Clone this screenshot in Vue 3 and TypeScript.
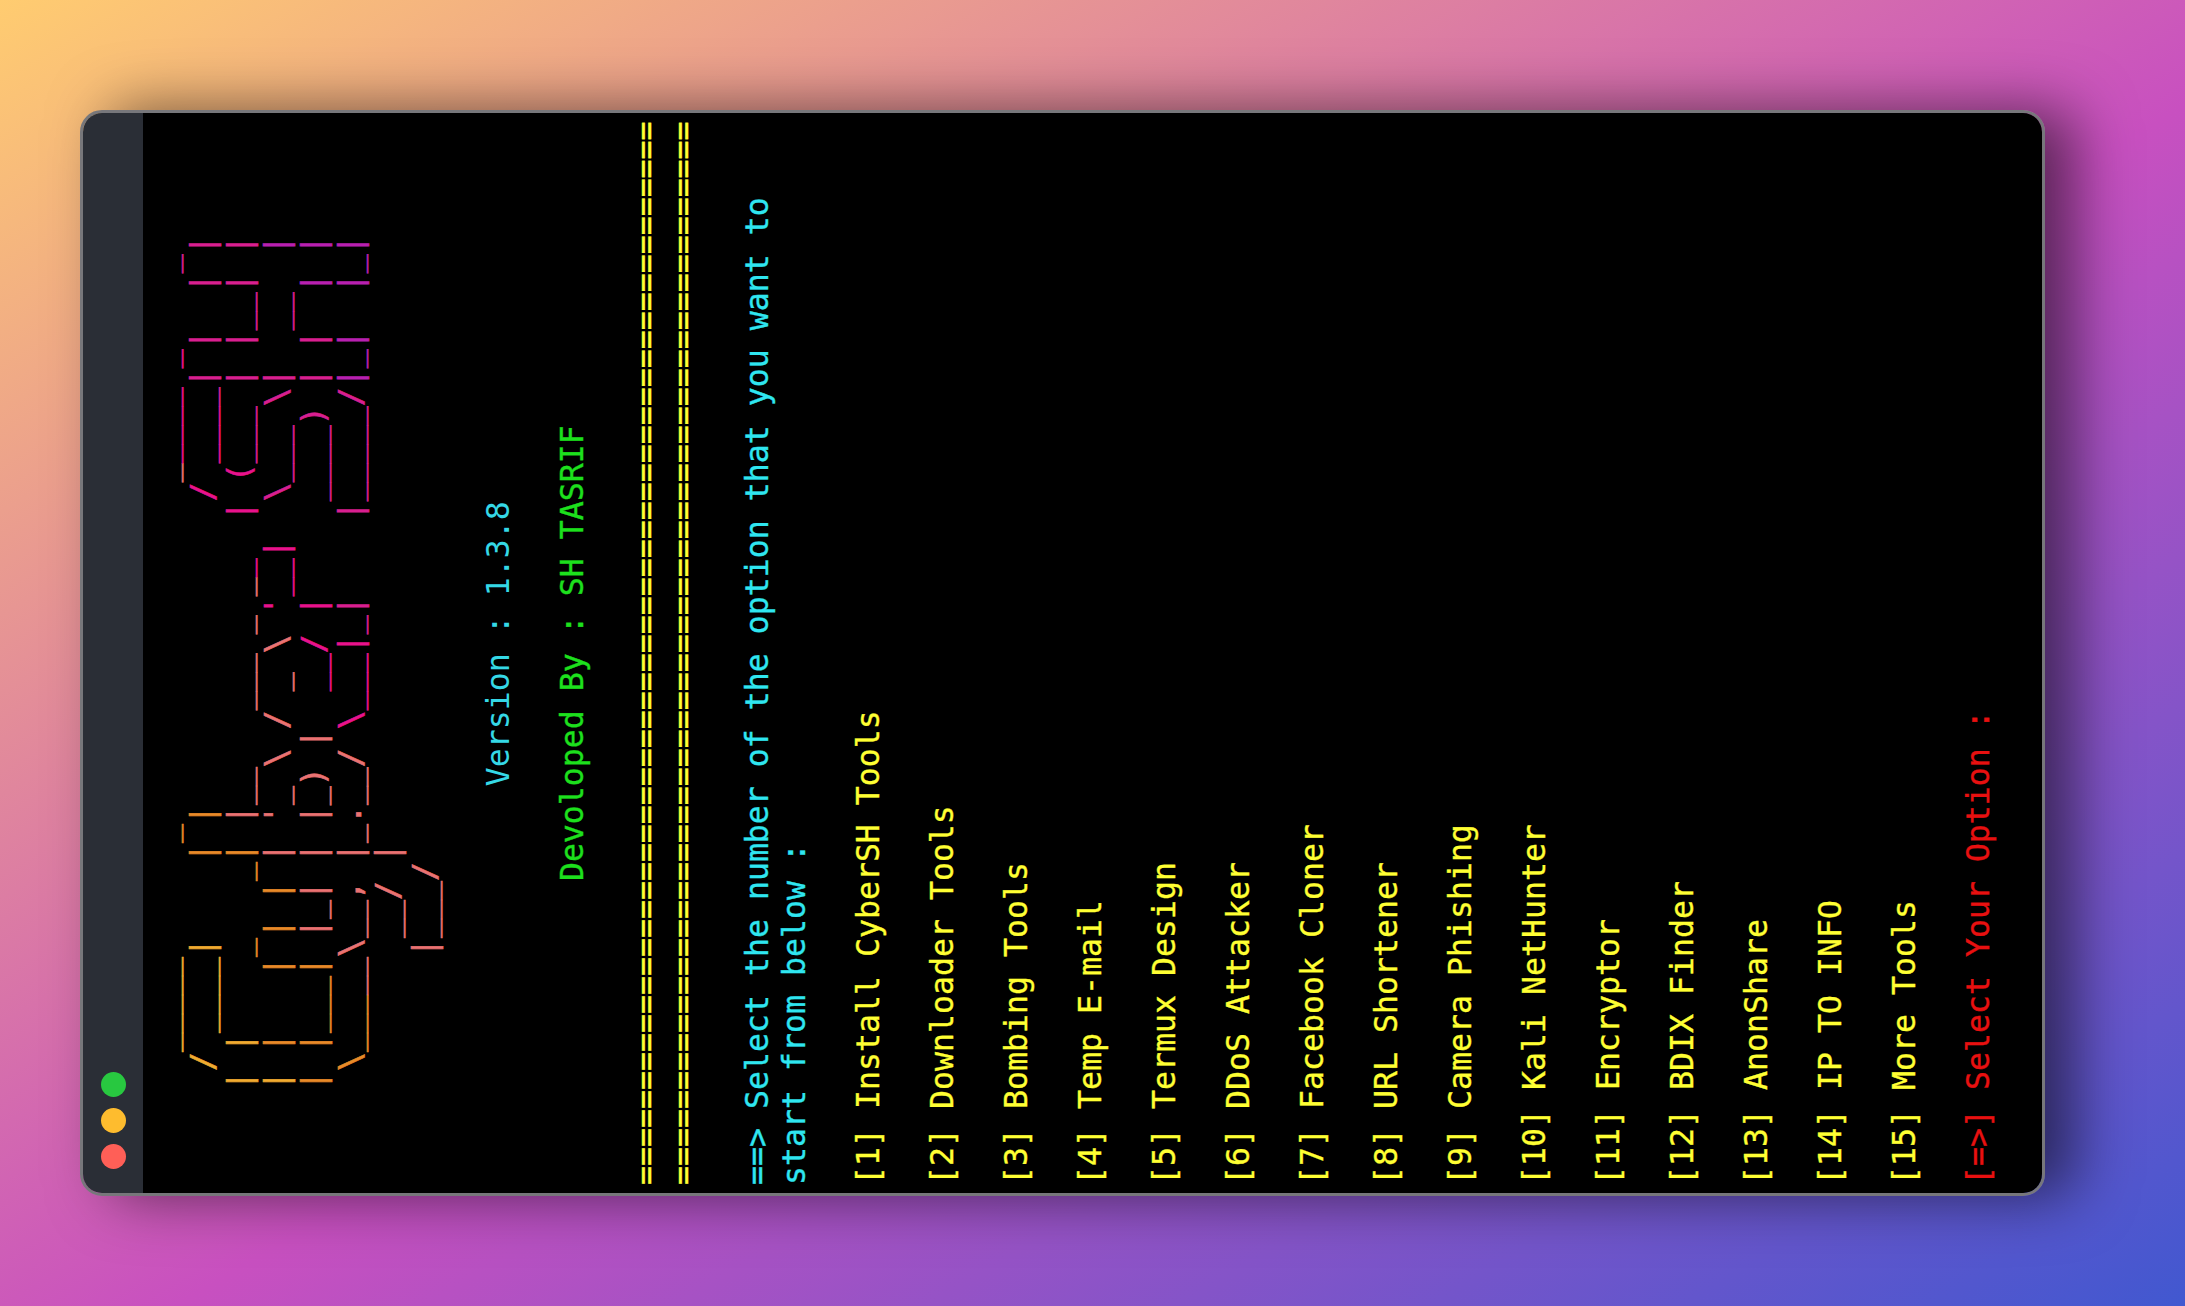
<script setup lang="ts">
interface Run { text: string; color: string }
interface Line { text: string; tone: string }

const art: string[] = [
  "   _____      _                  _____ _    _ ",
  "  / ____|    | |                / ____| |  | |",
  " | |    _   _| |__   ___ _ __  | (___ | |__| |",
  " | |   | | | | '_ \\ / _ \\ '__|  \\___ \\|  __  |",
  " | |___| |_| | |_) |  __/ |     ____) | |  | |",
  "  \\_____\\__, |_.__/ \\___|_|    |_____/|_|  |_|",
  "         __/ |                                ",
  "        |___/                                 ",
];

function band(u: number): string {
  if (u < 11.5) return "#f0ab30";
  if (u < 20.5) return "#e88a28";
  if (u < 33.5) return "#ea7272";
  if (u < 39.5) return "#e8128c";
  if (u < 52.5) return "#d81f90";
  return "#b820b0";
}

const indent = "    ";

const artRuns: Run[][] = art.map((row, lineNo) => {
  const runs: Run[] = [];
  [...row].forEach((ch, col) => {
    const color = band(col + lineNo * 3);
    const last = runs[runs.length - 1];
    if (last && last.color === color) last.text += ch;
    else runs.push({ text: ch, color });
  });
  return runs;
});

const rule = "=".repeat(56);
const tools = [
  "Install CyberSH Tools", "Downloader Tools", "Bombing Tools", "Temp E-mail", "Termux Design",
  "DDoS Attacker", "Facebook Cloner", "URL Shortener", "Camera Phishing", "Kali NetHunter",
  "Encryptor", "BDIX Finder", "AnonShare", "IP TO INFO", "More Tools",
];

const lines: Line[] = [
  { text: "", tone: "" },
  { text: " ".repeat(21) + "Version : 1.3.8", tone: "version" },
  { text: "", tone: "" },
  { text: " ".repeat(16) + "Devoloped By : SH TASRIF", tone: "green" },
  { text: "", tone: "" },
  { text: rule, tone: "yellow" },
  { text: rule, tone: "yellow" },
  { text: "", tone: "" },
  { text: "==> Select the number of the option that you want to", tone: "cyan" },
  { text: "start from below :", tone: "cyan" },
  { text: "", tone: "" },
  ...tools.flatMap((name, i): Line[] => [
    { text: `[${i + 1}] ${name}`, tone: "yellow" },
    { text: "", tone: "" },
  ]),
  { text: "[=>] Select Your Option :", tone: "red" },
];
</script>

<template>
  <div class="page">
    <div class="window">
      <div class="titlebar">
        <span class="dot green-dot"></span>
        <span class="dot yellow-dot"></span>
        <span class="dot red-dot"></span>
      </div>
      <div class="terminal">
        <div v-for="(runs, i) in artRuns" :key="'a' + i" class="line art-line">{{ indent }}<span v-for="(run, j) in runs" :key="j" :style="{ color: run.color }">{{ run.text }}</span></div>
        <div v-for="(line, i) in lines" :key="'l' + i" class="line" :class="line.tone">{{ line.text }}</div>
      </div>
    </div>
  </div>
</template>

<style>
html, body { margin: 0; padding: 0; }
</style>

<style scoped>
.page {
  box-sizing: border-box;
  width: 2185px;
  height: 1306px;
  padding: 110px 140px 110px 80px;
  display: flex;
  background: linear-gradient(to top left, #4158d0 0%, #c850c0 46%, #ffcc70 100%);
  overflow: hidden;
}
.window {
  flex: 1;
  display: flex;
  border: 3px solid #77777b;
  border-radius: 22px;
  overflow: hidden;
  box-shadow: 30px 0 60px rgba(0, 0, 0, 0.55);
}
.titlebar {
  flex: 0 0 60px;
  display: flex;
  flex-direction: column;
  align-items: center;
  justify-content: flex-end;
  gap: 11px;
  padding-bottom: 24px;
  box-sizing: border-box;
  background: #2a2e36;
}
.dot {
  width: 25px;
  height: 25px;
  border-radius: 50%;
}
.green-dot { background: #28c840; }
.yellow-dot { background: #febc2e; }
.red-dot { background: #ff5f57; }
.terminal {
  flex: 1;
  min-width: 0;
  box-sizing: border-box;
  background: #000;
  writing-mode: vertical-rl;
  transform: rotate(180deg);
  padding-block-start: 4px;
  padding-inline-start: 8px;
  font-family: "DejaVu Sans Mono", monospace;
  font-size: 31.56px;
  line-height: 37px;
  font-variant-ligatures: none;
  -webkit-text-stroke: 0.35px currentColor;
}
.line {
  white-space: pre;
  min-block-size: 37px;
}
.art-line { -webkit-text-stroke-width: 0.6px; }
.version { color: #35d8e6; -webkit-text-stroke-width: 0; }
.green { color: #1de01d; }
.yellow { color: #ffff33; }
.cyan { color: #2fe6f0; }
.red { color: #e81010; }
</style>
